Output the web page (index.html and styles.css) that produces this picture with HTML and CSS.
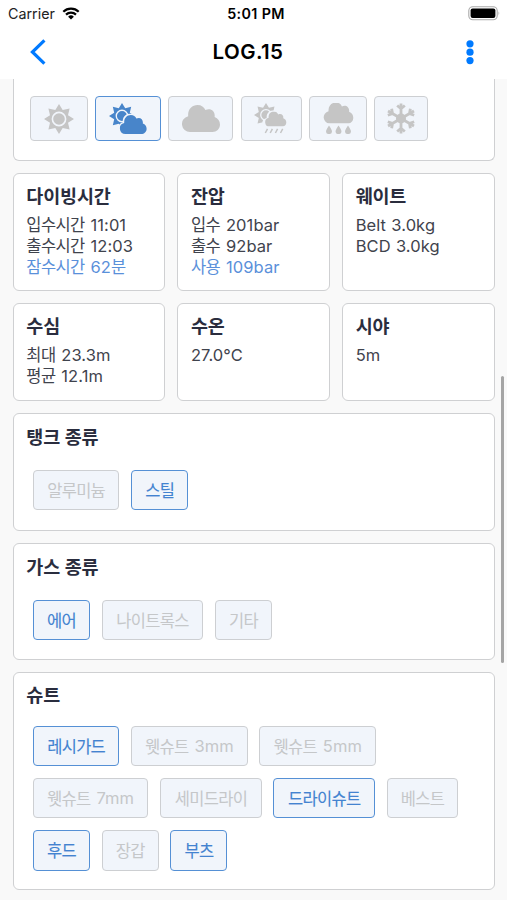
FILE: index.html
```html
<!DOCTYPE html>
<html lang="ko">
<head>
<meta charset="utf-8">
<title>LOG.15</title>
<link rel="stylesheet" href="styles.css">
</head>
<body>
<svg class="defs" width="0" height="0" aria-hidden="true">
  <symbol id="cloud" viewBox="0 0 38 27"><path d="M8 27A8 8 0 0 1 6.2 11.2C5.5 4.5 10 0 15.5 0C19.5 0 22 2 23.4 5C29 2.5 33.5 6.5 32.6 12C36 13.2 38 16 38 19.5C38 24 34.5 27 30.5 27Z"/></symbol>
  <symbol id="sun" viewBox="-15 -15 30 30">
    <path d="M0-15L3.7-9L10.6-10.6L9-3.7L15 0L9 3.7L10.6 10.6L3.7 9L0 15L-3.7 9L-10.6 10.6L-9 3.7L-15 0L-9-3.7L-10.6-10.6L-3.7-9Z"/>
    <circle class="cut" r="6.6"/>
  </symbol>
</svg>
<header class="header">
  <div class="status">
    <div class="carrier">Carrier
      <svg width="18" height="13" viewBox="0 0 18 13" fill="none" stroke="#000" stroke-width="2.2"><path d="M1.3 4.8A11 11 0 0 1 16.7 4.8M4 7.6A7.2 7.2 0 0 1 14 7.6"/><path d="M9 12.6L6.1 9.8A4.1 4.1 0 0 1 11.9 9.8Z" fill="#000" stroke="none"/></svg>
    </div>
    <div class="time">5:01 PM</div>
    <svg class="battery" width="33" height="15" viewBox="0 0 33 15"><rect x=".8" y=".8" width="28.4" height="13" rx="4" fill="#fff" stroke="#aaa" stroke-width="1.1"/><rect x="2.6" y="2.6" width="24.8" height="9.4" rx="2"/><path d="M30.6 5.2Q32.2 7.3 30.6 9.4Z" fill="#999"/></svg>
  </div>
  <nav class="nav">
    <svg width="16" height="26" viewBox="0 0 16 26" fill="none" stroke="#007aff" stroke-width="3.2"><path d="M14.4 1.4L2.4 13L14.4 24.6"/></svg>
    <h1>LOG.15</h1>
    <svg class="more" width="8" height="26" viewBox="0 0 8 26" fill="#007aff"><circle cx="4" cy="4.8" r="3.6"/><circle cx="4" cy="13.2" r="3.6"/><circle cx="4" cy="21.6" r="3.6"/></svg>
  </nav>
</header>
<main class="content">
  <section class="card weather">
    <div class="wchip w-sun"><svg width="30" height="30"><use href="#sun"/></svg></div>
    <div class="wchip w-wide on"><svg width="38" height="31" viewBox="0 0 38 31"><use href="#sun" x="0" y="0" width="26" height="26"/><use class="edge" href="#cloud" x="8.5" y="10.4" width="31" height="21.5"/><use href="#cloud" x="10.5" y="12" width="27.5" height="19"/></svg></div>
    <div class="wchip w-wide"><svg width="38" height="27"><use href="#cloud"/></svg></div>
    <div class="wchip w-shower"><svg width="34" height="31" viewBox="0 0 34 31"><use href="#sun" width="24" height="24"/><use class="edge" href="#cloud" x="7.7" y="7.2" width="28" height="19"/><use href="#cloud" x="9.5" y="8.6" width="24.5" height="15"/><path class="line" d="M13.5 25.8L11.3 30M18.4 25.8L16.2 30M23.6 25.8L21.4 30M28.7 25.8L26.5 30"/></svg></div>
    <div class="wchip w-sun"><svg width="31" height="31" viewBox="0 0 31 31"><use href="#cloud" y="-.5" width="31" height="21"/><path d="M6 22.5Q9 27 9 28.2A3 2.9 0 0 1 3 28.2Q3 27 6 22.5ZM15.5 22.5Q18.5 27 18.5 28.2A3 2.9 0 0 1 12.5 28.2Q12.5 27 15.5 22.5ZM25 22.5Q28 27 28 28.2A3 2.9 0 0 1 22 28.2Q22 27 25 22.5Z"/></svg></div>
    <div class="wchip w-snow"><svg width="28" height="31" viewBox="-14 -15.5 28 31"><g class="flake"><path id="arm" d="M0 0V-15M-3.8-13L0-9.8L3.8-13"/><use href="#arm" transform="rotate(60)"/><use href="#arm" transform="rotate(120)"/><use href="#arm" transform="rotate(180)"/><use href="#arm" transform="rotate(240)"/><use href="#arm" transform="rotate(300)"/></g><circle r="5"/></svg></div>
  </section>
  <div class="row row-a">
    <section class="card"><h2>다이빙시간</h2><p>입수시간 <b>11:01</b></p><p>출수시간 <b>12:03</b></p><p class="blue">잠수시간 <b>62</b>분</p></section>
    <section class="card"><h2>잔압</h2><p>입수 <b>201bar</b></p><p>출수 <b>92bar</b></p><p class="blue">사용 <b>109bar</b></p></section>
    <section class="card"><h2>웨이트</h2><p><b>Belt 3.0kg</b></p><p><b>BCD 3.0kg</b></p></section>
  </div>
  <div class="row row-b">
    <section class="card"><h2>수심</h2><p>최대 <b>23.3m</b></p><p>평균 <b>12.1m</b></p></section>
    <section class="card"><h2>수온</h2><p><b>27.0°C</b></p></section>
    <section class="card"><h2>시야</h2><p><b>5m</b></p></section>
  </div>
  <section class="card group tank"><h2>탱크 종류</h2>
    <div class="chips"><div class="chip c4">알루미늄</div><div class="chip c2 on">스틸</div></div>
  </section>
  <section class="card group gas"><h2>가스 종류</h2>
    <div class="chips"><div class="chip c2 on">에어</div><div class="chip c5">나이트록스</div><div class="chip c2">기타</div></div>
  </section>
  <section class="card group suit"><h2>슈트</h2>
    <div class="chips"><div class="chip c4 on">레시가드</div><div class="chip cmm">웻슈트 <b>3mm</b></div><div class="chip cmm">웻슈트 <b>5mm</b></div></div>
    <div class="chips"><div class="chip cmm7">웻슈트 <b>7mm</b></div><div class="chip c5">세미드라이</div><div class="chip c5 on">드라이슈트</div><div class="chip c3">베스트</div></div>
    <div class="chips"><div class="chip c2 on">후드</div><div class="chip c2">장갑</div><div class="chip c2 on">부츠</div></div>
  </section>
</main>
<div class="scrollbar"></div>
</body>
</html>
```

FILE: styles.css
```css
* { box-sizing: border-box; }
body {
  margin: 0;
  height: 900px;
  overflow: hidden;
  background: #f9f9f9;
  color: #3f434d;
  font-family: Inter, "Noto Sans CJK KR", sans-serif;
}
svg { display: block; flex: none; }
.defs { position: absolute; }
h1, h2, p { margin: 0; }

.header { height: 79px; background: #fff; color: #000; }
.status {
  display: grid;
  grid-template-columns: 1fr auto 1fr;
  align-items: center;
  height: 27px;
  padding: 0 5px 0 8px;
}
.carrier { display: flex; align-items: center; gap: 7px; font-size: 14.3px; color: #222; }
.time { margin-left: 2px; font-size: 14.3px; font-weight: 600; letter-spacing: .35px; }
.battery { justify-self: end; margin-right: 1px; }
.nav {
  display: grid;
  grid-template-columns: 1fr auto 1fr;
  align-items: center;
  height: 52px;
  padding: 0 33px 2px 30px;
}
.nav h1 { margin-right: 8px; font-size: 20.5px; font-weight: 600; line-height: 24px; letter-spacing: .4px; }
.more { justify-self: end; }

.content { padding: 0 12.5px; }
.card { border: 1.5px solid #cfd0d2; border-radius: 6px; background: #fff; padding: 0 12.8px; }
.weather {
  display: flex;
  gap: 7.2px;
  height: 82px;
  padding: 17px 16.6px 0;
  border-top: 0;
  border-radius: 0 0 6px 6px;
}
.wchip, .chip {
  display: flex;
  align-items: center;
  justify-content: center;
  border: 1.5px solid #cdcfd2;
  border-radius: 4px;
  background: #f1f5fb;
  color: #c5c7c9;
  fill: #c5c5c5;
  flex: none;
}
.wchip { height: 45px; }
.w-sun { width: 57.7px; }
.w-wide { width: 65.6px; }
.w-shower { width: 61.7px; }
.w-snow { width: 53.7px; }
.on { border-color: #5590d5; color: #4383d0; fill: #4885ca; }
.cut { fill: none; stroke: #f1f5fb; stroke-width: 1.6; }
.edge { fill: #f1f5fb; }
.line { fill: none; stroke: #c5c5c5; stroke-width: 1.5; }
.flake { fill: none; stroke: #c5c5c5; stroke-width: 2.8; }

.row { display: grid; grid-template-columns: repeat(3, 1fr); gap: 12px; margin-top: 12px; }
.row-a { height: 118px; }
.row-b { height: 98px; }
h2 {
  height: 41.4px;
  padding-top: 9px;
  color: #2a2d3e;
  font-size: 18.5px;
  font-weight: 700;
  line-height: 26px;
  letter-spacing: -.15px;
  word-spacing: .4px;
  white-space: nowrap;
}
p { font-size: 16.5px; line-height: 20.8px; letter-spacing: -.6px; word-spacing: 1.8px; white-space: nowrap; }
b { font-weight: 400; letter-spacing: .08px; word-spacing: .6px; }
.blue { color: #5a90da; }

.group { margin-top: 12px; padding-bottom: 18px; }
.tank, .gas { height: 117.5px; }
.suit { height: 218px; }
.group h2 { height: 56px; padding-top: 10px; }
.suit h2 { height: 53px; padding-top: 9px; }
.chips { display: flex; gap: 11.8px; margin: 0 0 12px 6.6px; }
.chip { height: 40.2px; font-size: 16.5px; letter-spacing: -.7px; word-spacing: 2px; white-space: pre; }
.chip.on { -webkit-text-stroke: .1px #4383d0; }
.c2 { width: 57px; }
.c3 { width: 71.5px; }
.c4 { width: 86.5px; }
.c5 { width: 101.5px; }
.cmm { width: 116.5px; }
.cmm7 { width: 115.5px; }

.scrollbar {
  position: absolute;
  top: 376px;
  right: 3px;
  width: 3px;
  height: 287px;
  border-radius: 2px;
  background: #a5a5a5;
}
```
